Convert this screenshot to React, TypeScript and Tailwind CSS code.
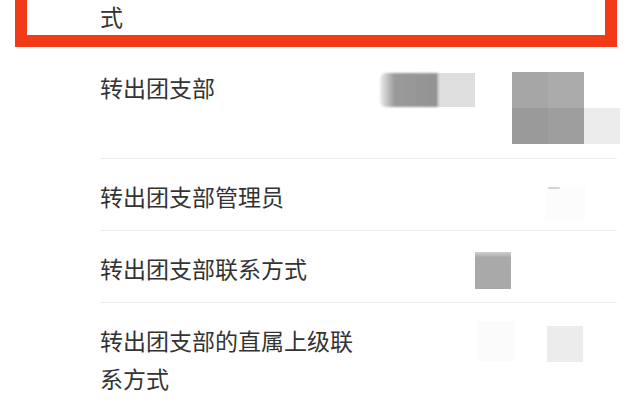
const font = { fontFamily: '"Noto Sans CJK SC", "Noto Sans", sans-serif' };

function Row({
  label,
  children,
  pt = "pt-[18px]",
  h = "h-[72px]",
  last = false,
}: {
  label: string;
  children?: React.ReactNode;
  pt?: string;
  h?: string;
  last?: boolean;
}) {
  return (
    <div className={`flex items-start ${pt} ${h} ${last ? "" : "border-b border-[#ededed]"}`}>
      <p className="w-[260px] shrink-0 text-[23px] leading-[38px] text-[#333]">{label}</p>
      {children}
    </div>
  );
}

export default function App() {
  return (
    <div className="h-[400px] w-[640px] overflow-hidden bg-white" style={font}>
      {/* highlighted item, top cut off */}
      <div className="mx-[15px] -mt-[71px] w-[602px] border-[12px] border-[#f23a18] pt-[18px] pl-[73px]">
        <p className="w-[305px] text-[23px] leading-[38px] text-[#333]">转出团支部的直属上级联系方式</p>
      </div>

      <div className="ml-[100px] mr-[23px]">
        <Row label="转出团支部" pt="pt-[21px]" h="h-[112px]">
          <div className="ml-[20px] mt-[5px] flex h-[34px]">
            <div className="w-[58px] rounded-l-md bg-linear-to-r from-[#eeeeee] via-[#9a9a9a] via-25% to-[#939393] blur-[1px]" />
            <div className="w-[37px] bg-[#dedede]" />
          </div>
          <div className="ml-[37px] mt-[4px] grid grid-cols-[36px_36px_36px] grid-rows-[36px_36px]">
            <div className="bg-[#a6a6a6]" />
            <div className="bg-[#ababab]" />
            <div />
            <div className="bg-[#9a9a9a]" />
            <div className="bg-[#9e9e9e]" />
            <div className="bg-[#ececec]" />
          </div>
        </Row>

        <Row label="转出团支部管理员">
          <div className="ml-[185px] mt-[8px] flex h-[36px] w-[40px] flex-col items-start bg-[#fcfcfc] pl-[3px] pt-[2px]">
            <div className="h-[2px] w-[12px] rounded-full bg-[#d4d4d4] blur-[0.5px]" />
          </div>
        </Row>

        <Row label="转出团支部联系方式">
          <div className="ml-[115px] mt-[3px] h-[37px] w-[36px] bg-linear-to-b from-[#cfcfcf] from-0% to-[#a9a9a9] to-15%" />
        </Row>

        <Row label="转出团支部的直属上级联系方式" h="h-[96px]" last>
          <div className="ml-[118px] mt-[0px] h-[40px] w-[36px] bg-[#fbfbfb]" />
          <div className="ml-[33px] mt-[5px] h-[36px] w-[36px] bg-[#ececec]" />
        </Row>
      </div>
    </div>
  );
}
